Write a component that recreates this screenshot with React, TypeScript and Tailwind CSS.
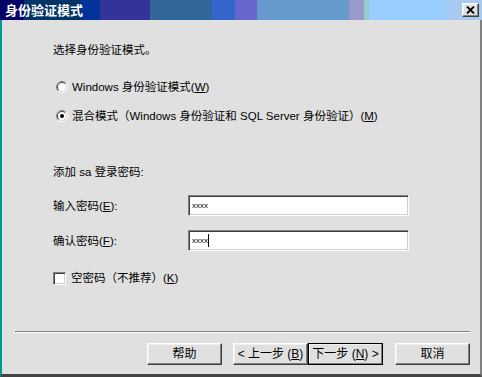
import React from 'react';

const font = "font-['Liberation_Sans','Noto_Sans_CJK_SC',sans-serif]";
const sunken =
  'border border-t-[#808080] border-l-[#808080] border-b-white border-r-white shadow-[inset_1px_1px_#404040,inset_-1px_-1px_#d4d0c8] bg-white';
const raised =
  'border border-t-white border-l-white border-b-[#404040] border-r-[#404040] shadow-[inset_-1px_-1px_#808080,inset_1px_1px_#f0f0f0] bg-[#e0e0e0]';

const titleBg =
  'bg-[linear-gradient(to_right,#000066_0_24px,#003366_24px_80px,#003399_80px_100px,#333399_100px_150px,#336699_150px_212px,#3366cc_212px_235px,#6666cc_235px_257px,#6699cc_257px_349px,#9999cc_349px_364px,#99cccc_364px_369px,#99ccff_369px_446px,#a6caf0_446px_482px)]';

function Key({ k }: { k: string }) {
  return (
    <>
      (<span className="underline underline-offset-1">{k}</span>)
    </>
  );
}

function Radio({ checked }: { checked?: boolean }) {
  return (
    <svg width="12" height="12" viewBox="0 0 12 12" className="shrink-0">
      <circle cx="6" cy="6" r="5" fill="#fff" />
      <path d="M2.1 9.9A5.5 5.5 0 0 1 9.9 2.1" fill="none" stroke="#808080" />
      <path d="M9.9 2.1A5.5 5.5 0 0 1 2.1 9.9" fill="none" stroke="#fff" />
      <path d="M2.8 9.2A4.5 4.5 0 0 1 9.2 2.8" fill="none" stroke="#404040" />
      <path d="M9.2 2.8A4.5 4.5 0 0 1 2.8 9.2" fill="none" stroke="#d4d0c8" />
      {checked && <circle cx="6" cy="6" r="2" fill="#000" />}
    </svg>
  );
}

function Field({ label, k, cursor }: { label: string; k: string; cursor?: boolean }) {
  return (
    <div className="flex items-center h-[21px]">
      <span className="w-[135px]">
        {label}
        <Key k={k} />:
      </span>
      <div className={`${sunken} w-[221px] h-[21px] flex items-center pl-[3px]`}>
        <span className="text-[8px] leading-[8px] font-['Liberation_Sans',sans-serif]">xxxx</span>
        {cursor && <span className="w-px h-[13px] bg-black" />}
      </div>
    </div>
  );
}

function Button({ children, primary }: { children: React.ReactNode; primary?: boolean }) {
  return (
    <div
      className={`${primary ? 'outline outline-1 outline-black -outline-offset-1' : ''} w-[75px] h-[22px]`}
    >
      <div className={`${raised} w-full h-full flex items-center justify-center`}>{children}</div>
    </div>
  );
}

export default function App() {
  return (
    <div className={`${font} w-[482px] h-[377px] text-black text-[11.5px] leading-4 flex flex-col`}>
      {/* Title bar */}
      <div className={`${titleBg} h-5 flex items-center justify-between pl-[5px] pr-[3px]`}>
        <span className="text-white font-bold text-[13px] leading-4 font-['Noto_Sans_CJK_SC',sans-serif]">
          身份验证模式
        </span>
        <div className={`${raised} w-[17px] h-[14px] flex items-center justify-center`}>
          <svg width="9" height="8" viewBox="0 0 9 8">
            <path d="M1 0.5L8 7.5M8 0.5L1 7.5" stroke="#000" strokeWidth="1.8" />
          </svg>
        </div>
      </div>

      {/* Body */}
      <div className="flex-1 flex flex-col bg-[#e0e0e0] border-l-2 border-l-[#009999] border-r-2 border-r-[#808080] border-b-[3px] border-b-[#454545]">
        <div className="pl-[51px] flex flex-col">
          <p className="mt-[22px]">选择身份验证模式。</p>

          <div className="mt-[21px] flex items-center h-4 gap-1 pl-[3px]">
            <Radio />
            <span>
              Windows 身份验证模式<Key k="W" />
            </span>
          </div>
          <div className="mt-[13px] flex items-center h-4 gap-1 pl-[3px]">
            <Radio checked />
            <span>
              混合模式（Windows 身份验证和 SQL Server 身份验证）<Key k="M" />
            </span>
          </div>

          <p className="mt-10">添加 sa 登录密码:</p>

          <div className="mt-[15px]">
            <Field label="输入密码" k="E" />
          </div>
          <div className="mt-[14px]">
            <Field label="确认密码" k="F" cursor />
          </div>

          <div className="mt-[19px] flex items-center h-4 gap-[5px]">
            <div className={`${sunken} w-[13px] h-[13px]`} />
            <span>
              空密码（不推荐）<Key k="K" />
            </span>
          </div>
        </div>

        {/* Separator */}
        <div className="mt-[45px] ml-[13px] mr-[10px] border-t border-t-[#808080] border-b border-b-white" />

        {/* Buttons */}
        <div className="mt-[10px] flex justify-end pr-[10px] text-[12px]">
          <Button>帮助</Button>
          <div className="ml-[11px] flex">
            <Button>
              &lt; 上一步 <Key k="B" />
            </Button>
            <Button primary>
              下一步 <Key k="N" /> &gt;
            </Button>
          </div>
          <div className="ml-3">
            <Button>取消</Button>
          </div>
        </div>
      </div>
    </div>
  );
}
